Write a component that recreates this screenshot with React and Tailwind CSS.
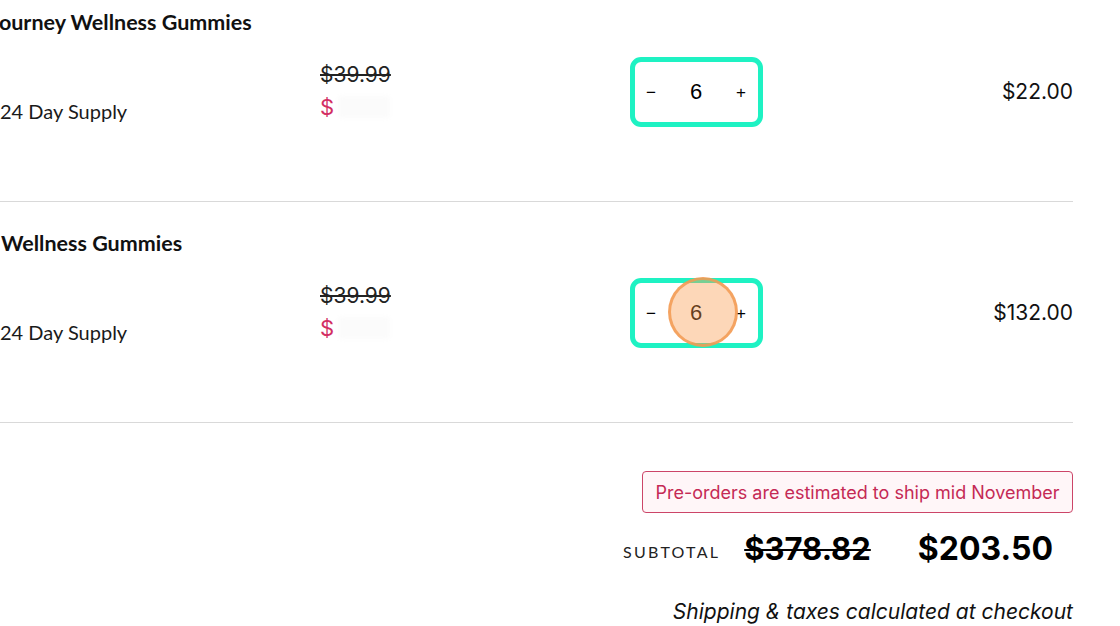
import React from 'react';

const items = [
  { title: 'Journey Wellness Gummies', cut: true, was: '$39.99', qty: 6, total: '$22.00', tapped: false },
  { title: 'Wellness Gummies', cut: false, was: '$39.99', qty: 6, total: '$132.00', tapped: true },
];

const QtyBox = ({ qty, tapped }) => (
  <div className="relative w-[133px] h-[70px] shrink-0">
    <div className="w-full h-full border-[5px] border-[#1ef2c3] rounded-[11px] flex items-center justify-between pl-[11px] pr-[12px] font-['Liberation_Sans',Arial,sans-serif] text-black">
      <span className="text-[17px] leading-none">−</span>
      <span className="text-[22px] leading-none">{qty}</span>
      <span className="text-[17px] leading-none">+</span>
    </div>
    {/* tap indicator from the recording */}
    {tapped && (
      <div className="absolute left-[38px] top-[-1px] w-[70px] h-[70px] rounded-full bg-[#f99a4e]/40 border-[3px] border-[#f29a52]/85" />
    )}
  </div>
);

const CartRow = ({ item, first }) => (
  <div className={`h-[221px] border-b border-[#d9d9d9] pt-[27px] ${first ? '-mt-[19px]' : ''}`}>
    <h2
      className={`text-[21.5px] leading-[28px] font-bold text-[#111] font-['Lato',sans-serif] whitespace-nowrap ${
        item.cut ? '-ml-[10px]' : 'ml-[1px]'
      }`}
    >
      {item.title}
    </h2>
    <div className="flex items-start mt-[21px] h-[70px]">
      <div className="w-[320px] pt-[41px]">
        <p className="text-[20px] leading-[26px] text-[#1a1a1a] font-['Lato',sans-serif]">24 Day Supply</p>
      </div>
      <div className="w-[310px] pt-[6px] font-['Inter',sans-serif]">
        <p className="text-[21px] leading-[24px] text-[#222] line-through decoration-[1.5px]">{item.was}</p>
        <div className="flex items-center mt-[8px] h-[24px]">
          <span className="text-[22px] leading-[24px] text-[#d22f63]">$</span>
          <span className="ml-[4px] w-[52px] h-[22px] bg-[#fbfbfb] rounded-[3px] blur-[2px]" />
        </div>
      </div>
      <QtyBox qty={item.qty} tapped={item.tapped} />
      <div className="flex-1 h-[70px] flex items-center justify-end">
        <span className="text-[21px] text-[#111] font-['Inter',sans-serif]">{item.total}</span>
      </div>
    </div>
  </div>
);

export default function App() {
  return (
    <div className="w-[1120px] h-[626px] overflow-hidden bg-white">
      <div className="w-[1073px]">
        {items.map((item, i) => (
          <CartRow key={i} item={item} first={i === 0} />
        ))}

        <div className="flex flex-col items-end pt-[48px]">
          <div className="w-[431px] h-[42px] flex items-center justify-center border-[1.5px] border-[#cc4568] rounded-[4px] bg-[#fff6f8] text-[#c52a55] text-[18px] font-['Inter',sans-serif]">
            Pre-orders are estimated to ship mid November
          </div>
          <div className="flex items-center mt-[16px] h-[40px] pr-[20px]">
            <span className="text-[16px] tracking-[0.14em] text-[#222] font-['Lato',sans-serif] mr-[24px] mt-[6px]">
              SUBTOTAL
            </span>
            <span className="text-[31px] font-bold text-black line-through decoration-[2px] font-['Inter',sans-serif] mr-[47px]">
              $378.82
            </span>
            <span className="text-[32px] font-bold text-black font-['Inter',sans-serif]">$203.50</span>
          </div>
          <p className="mt-[27px] text-[21px] italic text-[#111] font-['Inter',sans-serif]">
            Shipping &amp; taxes calculated at checkout
          </p>
        </div>
      </div>
    </div>
  );
}
